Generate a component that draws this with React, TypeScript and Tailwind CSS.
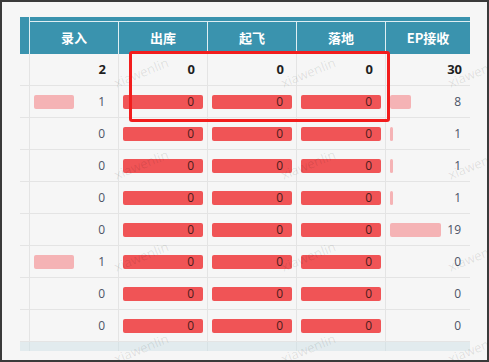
import React from "react";

type Row = { vals: number[]; bold?: boolean };

const cols = ["录入", "出库", "起飞", "落地", "EP接收"];

// bar mode per column: "share" = proportional pink bar, "full" = solid red bar
const barMode = ["share", "full", "full", "full", "share"] as const;

const rows: Row[] = [
    { vals: [2, 0, 0, 0, 30], bold: true },
    { vals: [1, 0, 0, 0, 8] },
    { vals: [0, 0, 0, 0, 1] },
    { vals: [0, 0, 0, 0, 1] },
    { vals: [0, 0, 0, 0, 1] },
    { vals: [0, 0, 0, 0, 19] },
    { vals: [1, 0, 0, 0, 0] },
    { vals: [0, 0, 0, 0, 0] },
    { vals: [0, 0, 0, 0, 0] },
];

const maxOf = (i: number) => Math.max(...rows.slice(1).map((r) => r.vals[i]), 1);
const colMax = [2, 1, 1, 1, 30];

const marks = [
    [115, 62], [282, 62], [449, 62],
    [115, 154], [282, 154], [449, 154],
    [115, 246], [282, 246], [449, 246],
    [115, 338], [282, 338], [449, 338],
];

function Cell({ value, col, bold }: { value: number; col: number; bold?: boolean }) {
    const last = col === 4;
    const pad = last ? "pl-[4px]" : "px-[4px]";
    if (bold) {
        return (
            <div className={`flex items-center justify-end border-l border-[#e4e4e4] ${pad}`}>
                <span className="pr-[8px] text-[13px] font-bold text-[#1e1e1e]">{value}</span>
            </div>
        );
    }
    const mode = barMode[col];
    const pct = mode === "full" ? 100 : (value / (colMax[col] || maxOf(col))) * 100;
    return (
        <div className={`flex items-center border-l border-[#e4e4e4] ${pad}`}>
            <div className="grid h-[14px] w-full">
                <div className="[grid-area:1/1] flex">
                    {pct > 0 && (
                        <div
                            className={`h-full rounded-[2px] ${mode === "full" ? "bg-[#f05456]" : "bg-[#f5b3b5]"}`}
                            style={{ width: `${pct}%` }}
                        />
                    )}
                </div>
                <div
                    className={`[grid-area:1/1] flex items-center justify-end pr-[9px] text-[12px] leading-none ${
                        mode === "full" ? "text-[#4a1c1c]" : "text-[#4c5466]"
                    }`}
                >
                    {value}
                </div>
            </div>
        </div>
    );
}

export default function App() {
    return (
        <div
            className="relative h-[362px] w-[489px] overflow-hidden border-2 border-[#3a3a3a] bg-[#f6f6f6]"
            style={{ fontFamily: '"Open Sans", "Noto Sans CJK SC", sans-serif' }}
        >
            <div className="ml-[18px] mt-[15px] w-[450px]">
                {/* header: thin strip + titles */}
                <div className="grid grid-cols-[9px_89px_89px_89px_89px_85px] bg-[#3a93ae]">
                    <div className="row-span-2" />
                    <div className="col-span-5 h-[5px] border-l border-b border-[#dfeef3]" />
                    {cols.map((c) => (
                        <div
                            key={c}
                            className="flex h-[32px] items-center justify-center border-l border-[#dfeef3] text-[13px] font-bold text-white"
                            style={{ fontFamily: '"Noto Sans CJK SC", "Open Sans", sans-serif' }}
                        >
                            {c}
                        </div>
                    ))}
                </div>

                {/* body */}
                {rows.map((r, ri) => (
                    <div
                        key={ri}
                        className="grid h-[32px] grid-cols-[9px_89px_89px_89px_89px_85px] border-b border-[#e4e4e4]"
                    >
                        <div />
                        {r.vals.map((v, ci) => (
                            <Cell key={ci} value={v} col={ci} bold={r.bold} />
                        ))}
                    </div>
                ))}

                <div className="grid h-[9px] grid-cols-[9px_89px_89px_89px_89px_85px] bg-[#e2ebee]">
                    <div />
                    <div className="border-l border-[#d8e2e5]" />
                    <div className="border-l border-[#d8e2e5]" />
                    <div className="border-l border-[#d8e2e5]" />
                    <div className="border-l border-[#d8e2e5]" />
                    <div className="border-l border-[#d8e2e5]" />
                </div>
            </div>

            {/* watermark */}
            {marks.map(([x, y], i) => (
                <span
                    key={i}
                    className="pointer-events-none absolute origin-left -rotate-[22deg] text-[13px] text-black/10"
                    style={{ left: x - 2, top: y + 10 }}
                >
                    xiawenlin
                </span>
            ))}

            {/* highlight frame */}
            <div className="pointer-events-none absolute left-[127px] top-[49px] h-[71px] w-[261px] rounded-[3px] border-[3px] border-[#f21d1d]" />
        </div>
    );
}
